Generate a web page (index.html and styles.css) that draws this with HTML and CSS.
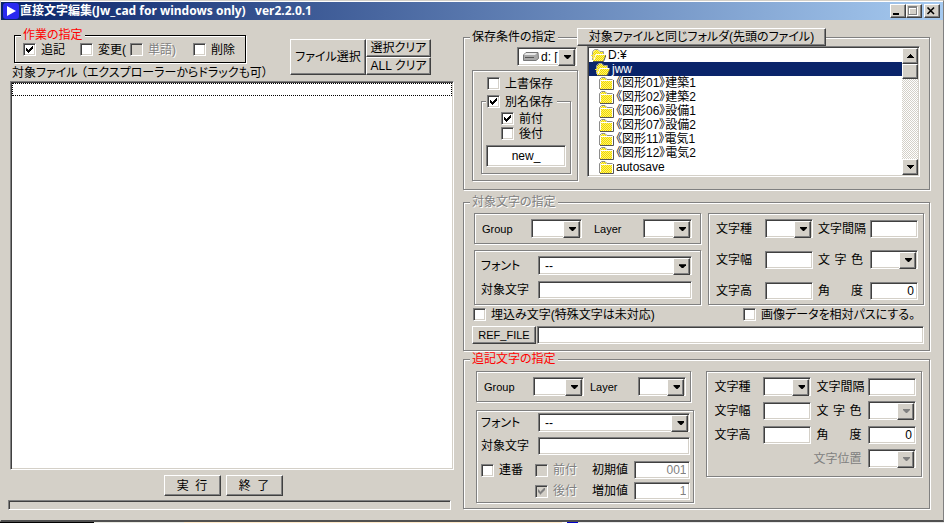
FILE: index.html
```html
<!DOCTYPE html>
<html lang="ja">
<head>
<meta charset="utf-8">
<title>直接文字編集</title>
<link rel="stylesheet" href="styles.css">
</head>
<body>
<svg class="defs" aria-hidden="true">
  <defs>
    <pattern id="dither" width="2" height="2" patternUnits="userSpaceOnUse">
      <rect width="2" height="2" fill="#fff36a"/><rect width="1" height="1" fill="#f0d800"/><rect x="1" y="1" width="1" height="1" fill="#f0d800"/>
    </pattern>
    <symbol id="folder" viewBox="0 0 15 13">
      <path d="M1 12V3L3 1H6L8 3H13V12Z" fill="url(#dither)"/>
      <path d="M.5 12V2.500L2.500.5H6L8 2.500H13.500" fill="none" stroke="#8c8c8c"/>
      <path d="M1.500 11V3.500H13" fill="none" stroke="#fff"/>
      <path d="M1 12.500H14.500V3" fill="none" stroke="#555"/>
    </symbol>
    <symbol id="folder-open" viewBox="0 0 15 13">
      <path d="M2 12V3L4 1H7L9 3H12V6H15L12 12Z" fill="url(#dither)"/>
      <path d="M1.500 11V2.500L3.500.5H7L9 2.500H12.500V5" fill="none" stroke="#a0a0a0"/>
      <path d="M3 11L5 5.500H14.500" fill="none" stroke="#fff"/>
      <path d="M0 6.500H3M1 8.500H3" stroke="#ffe83a"/>
      <path d="M2 12.500H12.500L15 6" fill="none" stroke="#555"/>
    </symbol>
  </defs>
</svg>
<div class="window">
  <header class="titlebar">
    <svg class="app-icon" viewBox="0 0 16 16"><rect width="16" height="16" rx="3" fill="#2a2af0"/><path d="M4 3L13 8L4 13Z" fill="#fff"/></svg>
    <h1>直接文字編集(Jw_cad for windows only)&nbsp;&nbsp; ver2.2.0.1</h1>
    <div class="window-buttons">
      <button type="button" aria-label="最小化"><svg viewBox="0 0 12 10"><path d="M2 7H8V9H2Z"/></svg></button>
      <button type="button" aria-label="最大化" disabled><svg viewBox="0 0 12 10"><path d="M2 1H11V10H2ZM3 3V9H10V3Z" fill="#fff" fill-rule="evenodd"/><path d="M1 0H10V9H1ZM2 2V8H9V2Z" fill="#808080" fill-rule="evenodd"/></svg></button>
      <button type="button" class="close" aria-label="閉じる"><svg viewBox="0 0 12 10"><path d="M2.500 1.500L9 8M9 1.500L2.500 8" stroke="#000" stroke-width="1.600"/></svg></button>
    </div>
  </header>

  <main class="content">
    <section class="files">
      <div class="file-head">
        <div class="file-head-left">
          <fieldset class="work">
            <legend>作業の指定</legend>
            <div class="work-row">
              <label class="check"><input type="checkbox" checked>追記</label>
              <label class="check change"><input type="checkbox">変更(</label>
              <label class="check off word"><input type="checkbox" disabled>単語)</label>
              <label class="check"><input type="checkbox">削除</label>
            </div>
          </fieldset>
          <label class="file-label" id="file-label">対象ファイル （エクスプローラーからドラックも可）</label>
        </div>
        <div class="file-buttons">
          <button type="button" class="pick">ファイル選択</button>
          <button type="button">選択クリア</button>
          <button type="button">ALL クリア</button>
        </div>
      </div>
      <div class="file-list sunken" role="listbox" tabindex="0" aria-labelledby="file-label"><div class="focus-row"></div></div>
      <div class="actions">
        <button type="button">実&nbsp; 行</button>
        <button type="button">終&nbsp; 了</button>
      </div>
      <progress value="0" max="100" aria-label="進行状況"></progress>
    </section>

    <section class="settings">
      <fieldset class="save">
        <legend>保存条件の指定</legend>
        <button type="button" class="same-folder">対象ファイルと同じフォルダ(先頭のファイル)</button>
        <div class="save-grid">
          <div class="save-left">
            <span class="combo drive">
              <svg viewBox="0 0 16 9"><path d="M3 .5H15L15.500 6.500L13 8.500H.5V3Z" fill="#a8a8a8" stroke="#777"/><path d="M3 1H14L12 3H1Z" fill="#e8e8e8"/><path d="M2 5.500H11" stroke="#555"/></svg>
              <select aria-label="ドライブ"><option>d: [..]</option></select>
            </span>
            <div class="etched save-mode">
              <label class="check overwrite"><input type="checkbox">上書保存</label>
              <fieldset class="rename">
                <legend><label class="check"><input type="checkbox" checked>別名保存</label></legend>
                <label class="check affix"><input type="checkbox" checked>前付</label>
                <label class="check affix"><input type="checkbox">後付</label>
                <input type="text" class="new-name" value="new_" aria-label="付加文字">
              </fieldset>
            </div>
          </div>
          <div class="folders sunken">
            <ul>
              <li><svg><use href="#folder-open"/></svg>D:¥</li>
              <li class="level1 selected"><svg><use href="#folder-open"/></svg>jww</li>
              <li class="level2"><svg><use href="#folder"/></svg>《図形01》建築1</li>
              <li class="level2"><svg><use href="#folder"/></svg>《図形02》建築2</li>
              <li class="level2"><svg><use href="#folder"/></svg>《図形06》設備1</li>
              <li class="level2"><svg><use href="#folder"/></svg>《図形07》設備2</li>
              <li class="level2"><svg><use href="#folder"/></svg>《図形11》電気1</li>
              <li class="level2"><svg><use href="#folder"/></svg>《図形12》電気2</li>
              <li class="level2"><svg><use href="#folder"/></svg>autosave</li>
              <li class="level2"><svg><use href="#folder"/></svg></li>
            </ul>
            <div class="scrollbar">
              <button type="button" aria-label="上へ"><svg viewBox="0 0 7 4"><path d="M3 0H4V1H5V2H6V3H7V4H0V3H1V2H2V1H3Z"/></svg></button>
              <div class="thumb"></div>
              <button type="button" class="down" aria-label="下へ"><svg viewBox="0 0 7 4"><path d="M0 0H7V1H6V2H5V3H4V4H3V3H2V2H1V1H0Z"/></svg></button>
            </div>
          </div>
        </div>
      </fieldset>

      <fieldset class="target">
        <legend>対象文字の指定</legend>
        <div class="pair">
          <div class="stack">
            <div class="etched layer-box">
              <label class="latin" for="t-group">Group</label>
              <span class="combo"><select id="t-group"><option></option></select></span>
              <label class="latin" for="t-layer">Layer</label>
              <span class="combo"><select id="t-layer"><option></option></select></span>
            </div>
            <div class="etched font-box">
              <label for="t-font">フォント</label>
              <span class="combo"><select id="t-font"><option>--</option></select></span>
              <label for="t-text">対象文字</label>
              <input type="text" id="t-text">
            </div>
          </div>
          <div class="etched params">
            <label for="t-kind">文字種</label><span class="combo"><select id="t-kind"><option></option></select></span>
            <label for="t-gap">文字間隔</label><input type="text" id="t-gap">
            <label for="t-width">文字幅</label><input type="text" id="t-width">
            <label for="t-color" class="spread">文 字 色</label><span class="combo"><select id="t-color"><option></option></select></span>
            <label for="t-height">文字高</label><input type="text" id="t-height">
            <label for="t-angle" class="spread">角 度</label><input type="text" id="t-angle" class="num" value="0">
          </div>
        </div>
        <div class="option-row">
          <label class="check"><input type="checkbox">埋込み文字(特殊文字は未対応)</label>
          <label class="check"><input type="checkbox">画像データを相対パスにする。</label>
        </div>
        <div class="ref-row">
          <button type="button" class="latin">REF_FILE</button>
          <input type="text" aria-label="REF_FILE">
        </div>
      </fieldset>

      <fieldset class="append">
        <legend>追記文字の指定</legend>
        <div class="pair">
          <div class="stack">
            <div class="etched layer-box">
              <label class="latin" for="a-group">Group</label>
              <span class="combo"><select id="a-group"><option></option></select></span>
              <label class="latin" for="a-layer">Layer</label>
              <span class="combo"><select id="a-layer"><option></option></select></span>
            </div>
            <div class="etched append-box">
              <div class="font-box">
                <label for="a-font">フォント</label>
                <span class="combo"><select id="a-font"><option>--</option></select></span>
                <label for="a-text">対象文字</label>
                <input type="text" id="a-text">
              </div>
              <div class="serial">
                <label class="check"><input type="checkbox">連番</label>
                <label class="check off"><input type="checkbox" disabled>前付</label>
                <label for="a-start">初期値</label>
                <input type="text" id="a-start" class="num" value="001" disabled>
                <label class="check off second"><input type="checkbox" checked disabled>後付</label>
                <label for="a-step">増加値</label>
                <input type="text" id="a-step" class="num" value="1" disabled>
              </div>
            </div>
          </div>
          <div class="etched params">
            <label for="a-kind">文字種</label><span class="combo"><select id="a-kind"><option></option></select></span>
            <label for="a-gap">文字間隔</label><input type="text" id="a-gap">
            <label for="a-width">文字幅</label><input type="text" id="a-width">
            <label for="a-color" class="spread">文 字 色</label><span class="combo off"><select id="a-color" disabled><option></option></select></span>
            <label for="a-height">文字高</label><input type="text" id="a-height">
            <label for="a-angle" class="spread">角 度</label><input type="text" id="a-angle" class="num" value="0">
            <label for="a-pos" class="position off">文字位置</label><span class="combo off"><select id="a-pos" disabled><option></option></select></span>
          </div>
        </div>
      </fieldset>
    </section>
  </main>
</div>
<div class="desktop-edge"></div>
</body>
</html>
```
FILE: styles.css
```css
:root {
  --face: #d4d0c8;
  --shade: #808080;
  --dark: #404040;
  --navy: #0a246a;
}

* { box-sizing: border-box; }

body {
  display: flex;
  flex-direction: column;
  min-height: 100vh;
  margin: 0;
  background: var(--face);
  color: #000;
  font: 12px/12px "Liberation Sans", "Noto Sans CJK JP", sans-serif;
  font-feature-settings: "palt";
}

button, input, select, legend { font: inherit; font-feature-settings: inherit; color: inherit; }

.defs { position: absolute; width: 0; height: 0; }

.window {
  display: flex;
  flex: 1;
  flex-direction: column;
  border: 1px solid var(--face);
  border-right-color: var(--shade);
  border-bottom: 2px solid #505050;
  box-shadow: inset 0 1px #fff;
}

.desktop-edge {
  height: 1px;
  background: linear-gradient(90deg, #000 94px, #e8e8e0 94px 184px, #ffe9c8 184px 562px, #fff 562px 567px, #00c 567px 578px, #e8e8e8 578px);
}

.titlebar {
  display: flex;
  align-items: center;
  height: 18px;
  margin-top: 1px;
  padding: 0 3px 0 2px;
  background: linear-gradient(90deg, var(--navy), #a6caf0);
  color: #fff;
}

.titlebar h1 {
  flex: 1;
  margin: 0 0 0 1px;
  font: bold 12px/18px "Noto Sans", "Noto Sans CJK JP", sans-serif;
  white-space: nowrap;
}

.app-icon { width: 16px; height: 16px; }
.window-buttons { display: flex; }
.window-buttons button { width: 16px; height: 14px; }
.window-buttons .close { margin-left: 2px; }
.window-buttons svg { display: block; width: 12px; height: 10px; }

button {
  padding: 0;
  border: 1px solid;
  border-color: #fff var(--dark) var(--dark) #fff;
  border-radius: 0;
  background: var(--face);
  box-shadow: inset -1px -1px var(--shade);
  white-space: nowrap;
}

.content {
  display: grid;
  flex: 1;
  grid-template-columns: minmax(0, 446fr) minmax(0, 467fr);
  gap: 9px;
  padding: 9px 13px 10px 7px;
}

fieldset { min-width: 0; margin: 0; }
legend { height: 12px; padding: 0 2px; background: var(--face); }

.etched, fieldset {
  border: 1px solid var(--shade);
  box-shadow: 1px 1px #fff, inset 1px 1px #fff;
}

.sunken, input[type="text"], .combo {
  border: 1px solid;
  border-color: var(--shade) #fff #fff var(--shade);
  background: #fff;
  box-shadow: inset 1px 1px var(--dark), inset -1px -1px var(--face);
}

input[type="text"] {
  width: 100%;
  min-width: 0;
  height: 18px;
  padding: 0 3px;
  border-radius: 0;
}
input.num { text-align: right; }
input:disabled { color: var(--shade); }

.combo { position: relative; display: block; height: 19px; }
.combo select {
  width: 100%;
  height: 17px;
  padding: 0 20px 0 6px;
  border: 0;
  background: transparent;
  appearance: none;
}
.combo::before {
  content: "";
  position: absolute;
  top: 1px;
  right: 1px;
  width: 15px;
  height: 15px;
  border: 1px solid;
  border-color: #fff var(--dark) var(--dark) #fff;
  background: var(--face);
  box-shadow: inset -1px -1px var(--shade);
  pointer-events: none;
}
.combo::after {
  content: "";
  position: absolute;
  top: 7px;
  right: 5px;
  width: 7px;
  height: 4px;
  background: #000;
  clip-path: polygon(0 0, 7px 0, 7px 1px, 4px 4px, 3px 4px, 0 1px);
  pointer-events: none;
}
.combo.off::after { background: var(--shade); }

.check { display: flex; align-items: center; gap: 5px; white-space: nowrap; }
.check input {
  flex: none;
  width: 13px;
  height: 13px;
  margin: 0;
  padding: 2px;
  border: 1px solid;
  border-color: var(--shade) #fff #fff var(--shade);
  background: #fff;
  box-shadow: inset 1px 1px var(--dark), inset -1px -1px var(--face);
  appearance: none;
}
.check input:checked::after {
  content: "";
  display: block;
  width: 7px;
  height: 7px;
  background: #000;
  clip-path: polygon(0 2px, 1px 2px, 1px 3px, 2px 3px, 2px 4px, 3px 4px, 3px 3px, 4px 3px, 4px 2px, 5px 2px, 5px 1px, 6px 1px, 6px 0, 7px 0, 7px 3px, 6px 3px, 6px 4px, 5px 4px, 5px 5px, 4px 5px, 4px 6px, 3px 6px, 3px 7px, 2px 7px, 2px 6px, 1px 6px, 1px 5px, 0 5px);
}
.check input:disabled { background: var(--face); }
.check input:disabled:checked::after { background: var(--shade); }
.off { color: var(--shade); text-shadow: 1px 1px #fff; }
.latin { font-size: 11px; }

/* File pane */
.files { display: flex; flex-direction: column; }
.file-head { display: flex; }
.file-head-left { flex: none; width: 282px; }
.work {
  width: 232px;
  margin-left: 6px;
  padding: 2px 8px 6px;
  border-color: #000;
}
.work legend { margin-left: -2px; color: #f00; }
.work-row { display: flex; }
.work-row .change { margin-left: 15px; }
.work-row .word { margin: 0 17px 0 4px; }
.file-label { display: block; margin: 2px 0 0 4px; line-height: 16px; white-space: nowrap; }
.file-buttons {
  display: grid;
  grid-template: 18px 18px / 76px 65px;
  margin-top: 10px;
}
.file-buttons .pick { grid-row: 1 / 3; }
.file-list { flex: 1; min-height: 120px; margin-left: 2px; padding: 1px; }
.focus-row { height: 13px; border: 1px dotted #000; }
.actions { display: flex; justify-content: center; gap: 5px; margin-top: 5px; padding-right: 16px; }
.actions button { width: 57px; height: 21px; }
progress {
  width: calc(100% - 3px);
  height: 10px;
  margin-top: 4px;
  border: 1px solid;
  border-color: var(--shade) #fff #fff var(--shade);
  background: var(--face);
  box-shadow: inset 1px 1px var(--dark);
  appearance: none;
}
progress::-webkit-progress-bar { background: transparent; }

/* Save conditions */
.settings { padding-top: 2px; }
.save { position: relative; padding: 3px 9px 8px 8px; }
.save > legend, .target > legend { margin-left: -2px; }
.same-folder { position: absolute; top: -15px; left: 113px; width: 249px; height: 18px; }
.save-grid { display: grid; grid-template-columns: 106px minmax(0, 1fr); gap: 9px; align-items: start; }
.save-left { padding-top: 1px; }
.drive { display: flex; align-items: center; width: 60px; margin: 0 1px 4px auto; padding-left: 5px; }
.drive svg { flex: none; width: 16px; height: 9px; }
.drive select { min-width: 0; padding: 0 15px 0 2px; }
.save-mode { height: 111px; padding: 6px 6px 6px 8px; }
.overwrite { padding-left: 6px; }
.rename { margin-top: 5px; padding: 4px 4px 6px; }
.rename legend { height: 13px; padding: 0 4px 0 1px; }
.affix { margin: 0 0 2px 15px; }
.rename .new-name { display: block; height: 22px; margin-top: 5px; text-align: center; }
.folders { display: flex; height: 131px; padding: 1px; overflow: hidden; }
.folders ul { flex: 1; height: 127px; margin: 0; padding: 0; overflow: hidden; list-style: none; }
.folders li { display: flex; align-items: center; gap: 2px; height: 14px; padding-left: 2px; white-space: nowrap; }
.folders li svg { flex: none; width: 15px; height: 13px; }
.folders .level1 { padding-left: 6px; }
.folders .level2 { padding-left: 10px; }
.folders .selected { background: var(--navy); color: #fff; }
.scrollbar {
  display: flex;
  flex-direction: column;
  width: 16px;
  background: repeating-conic-gradient(#fff 0 25%, var(--face) 0 50%) 0 0 / 2px 2px;
}
.scrollbar button { display: grid; place-items: center; height: 16px; }
.scrollbar svg { width: 7px; height: 4px; }
.scrollbar .down { margin-top: auto; }
.thumb {
  height: 15px;
  border: 1px solid;
  border-color: #fff var(--dark) var(--dark) #fff;
  background: var(--face);
  box-shadow: inset -1px -1px var(--shade);
}

/* Text settings */
.pair { display: grid; align-items: start; }
.layer-box { display: grid; align-items: center; height: 31px; padding: 0 8px 0 7px; }
.font-box { display: grid; align-items: center; }
.params {
  display: grid;
  grid-template-columns: 49px 48px 57px minmax(0, 1fr);
  grid-auto-rows: 19px;
  align-items: center;
  padding: 5px 5px 5px 7px;
}
.params label { white-space: nowrap; }
.params label:nth-of-type(even) { padding-left: 5px; }
.params .spread { padding-right: 7px; text-align-last: justify; }

.target { margin-top: 6px; padding: 5px 5px 6px 8px; }
.target legend { color: var(--shade); text-shadow: 1px 1px #fff; }
.target .pair { grid-template-columns: minmax(0, 227fr) minmax(0, 216fr); gap: 7px; margin-left: 2px; }
.target .layer-box { grid-template-columns: 49px 51px 12px 49px 1fr; }
.target .layer-box label:nth-of-type(2) { grid-column: 4; }
.target .font-box { grid-template-columns: 57px 1fr; gap: 3px 0; height: 55px; margin-top: 6px; padding: 4px 8px 4px 6px; }
.target .params { row-gap: 12px; height: 92px; }
.option-row { display: grid; grid-template-columns: 270px 1fr; margin: 3px 0 5px 1px; }
.ref-row { display: grid; grid-template-columns: 64px minmax(0, 1fr); gap: 1px; }

.append { margin-top: 2px; padding: 6px 7px 5px 12px; }
.append > legend { margin-left: -6px; color: #f00; }
.append .pair { grid-template-columns: minmax(0, 219fr) minmax(0, 216fr); gap: 12px; }
.append .layer-box { grid-template-columns: 49px 51px 6px 48px 1fr; margin-right: 3px; padding-right: 4px; }
.append .layer-box label:nth-of-type(2) { grid-column: 4; }
.append-box { height: 93px; margin-top: 8px; padding: 2px 3px 2px 4px; }
.append .font-box { grid-template-columns: 57px 1fr; gap: 5px 0; }
.serial {
  display: grid;
  grid-template-columns: 54px 57px 42px minmax(0, 1fr);
  align-items: center;
  gap: 3px 0;
  margin-top: 6px;
}
.serial .second { grid-column: 2; }
.append .params { row-gap: 5px; padding-bottom: 8px; }
.append .params .position { grid-column: 3; padding-left: 2px; text-shadow: none; }
```
